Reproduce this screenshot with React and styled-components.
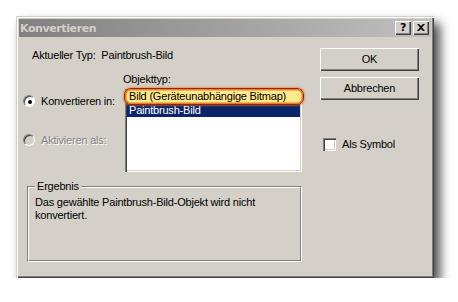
import { styled, createGlobalStyle } from "styled-components"

const GlobalStyle = createGlobalStyle`
  html, body {
    margin: 0;
    background: #ffffff;
  }
  body {
    font-family: "Liberation Sans", Arial, sans-serif;
    font-size: 11px;
    letter-spacing: -0.2px;
    color: #000000;
  }
`

const Page = styled.div`
  padding: 16px 0 0 16px;
`

const Dialog = styled.div`
  box-sizing: border-box;
  width: 418px;
  height: 262px;
  padding: 3px;
  background: #d4d0c8;
  box-shadow:
    inset 1px 1px 0 #d4d0c8,
    inset 2px 2px 0 #ffffff,
    inset -1px -1px 0 #404040,
    inset -2px -2px 0 #808080,
    6px 7px 10px rgba(0, 0, 0, 0.7);
`

const TitleBar = styled.div`
  height: 18px;
  display: flex;
  align-items: center;
  padding: 0 2px 0 1px;
  background: linear-gradient(90deg, #808080 0%, #c0c0c0 100%);
`

const Title = styled.span`
  flex: 1;
  font-family: "DejaVu Sans", Tahoma, sans-serif;
  font-weight: bold;
  font-size: 11px;
  color: #d4d0c8;
  letter-spacing: -0.4px;
`

const TitleButton = styled.div`
  box-sizing: border-box;
  width: 16px;
  height: 14px;
  margin-left: ${(p) => (p.$gap ? "2px" : "0")};
  background: #d4d0c8;
  box-shadow:
    inset 1px 1px 0 #ffffff,
    inset -1px -1px 0 #404040,
    inset -2px -2px 0 #808080;
  display: flex;
  align-items: center;
  justify-content: center;
  font-family: "DejaVu Sans", Tahoma, sans-serif;
  font-weight: bold;
  font-size: 11px;
  line-height: 14px;
  padding-bottom: 1px;
`

const Content = styled.div`
  display: flex;
`

const LeftPane = styled.div`
  width: 283px;
  display: flex;
  flex-direction: column;
`

const RightPane = styled.div`
  flex: 1;
  padding-left: 18px;
  display: flex;
  flex-direction: column;
`

const Line = styled.div`
  height: 13px;
  line-height: 13px;
  white-space: pre;
  margin-top: ${(p) => p.$top || 0}px;
  margin-left: ${(p) => p.$left || 0}px;
`

const Middle = styled.div`
  display: flex;
  margin-top: 3px;
`

const RadioColumn = styled.div`
  width: 102px;
  padding: 6px 0 0 4px;
  display: flex;
  flex-direction: column;
  gap: 27px;
`

const OptionRow = styled.label`
  display: flex;
  align-items: center;
  gap: 6px;
  height: ${(p) => (p.$box ? 13 : 12)}px;
  line-height: 13px;
  color: ${(p) => (p.$disabled ? "#808080" : "#000000")};
  text-shadow: ${(p) => (p.$disabled ? "1px 1px 0 #ffffff" : "none")};
  margin-left: ${(p) => p.$left || 0}px;
  margin-top: ${(p) => p.$top || 0}px;
`

const ListBox = styled.div`
  box-sizing: border-box;
  width: 177px;
  height: 83px;
  padding: 2px;
  background: #ffffff;
  box-shadow:
    inset 1px 1px 0 #808080,
    inset 2px 2px 0 #404040,
    inset -1px -1px 0 #ffffff,
    inset -2px -2px 0 #d4d0c8;
  position: relative;
`

const ListItem = styled.div`
  height: 13px;
  line-height: 13px;
  padding-left: 2px;
  white-space: nowrap;
  color: ${(p) => (p.$selected ? "#ffffff" : "#000000")};
  background: ${(p) => (p.$selected ? "#0a246a" : "transparent")};
`

const Highlight = styled.div`
  position: absolute;
  left: -1px;
  right: -2px;
  top: -1px;
  height: 13px;
  line-height: 13px;
  padding: 1px 0 1px 4px;
  white-space: nowrap;
  border-radius: 7px;
  background: #ffe98c;
  border: 1px solid #8a2a08;
  box-shadow:
    inset 0 0 0 1.5px #ee7a2a,
    0 0 2px 1px rgba(238, 110, 30, 0.6);
`

const GroupBox = styled.div`
  position: relative;
  box-sizing: border-box;
  width: 275px;
  height: 76px;
  margin: 14px 0 0 8px;
  border: 1px solid;
  border-color: #808080 #ffffff #ffffff #808080;
`

const GroupInner = styled.div`
  box-sizing: border-box;
  height: 100%;
  border: 1px solid;
  border-color: #ffffff #808080 #808080 #ffffff;
  padding: 8px 0 0 6px;
  line-height: 13px;
`

const GroupLabel = styled.span`
  position: absolute;
  top: -7px;
  left: 7px;
  padding: 0 2px;
  line-height: 13px;
  background: #d4d0c8;
`

const Button = styled.div`
  box-sizing: border-box;
  width: 99px;
  height: 23px;
  margin-top: ${(p) => p.$top}px;
  background: #d4d0c8;
  box-shadow:
    inset 1px 1px 0 #ffffff,
    inset -1px -1px 0 #404040,
    inset -2px -2px 0 #808080;
  display: flex;
  align-items: center;
  justify-content: center;
  padding-bottom: 1px;
`

const RadioDot = styled.span`
  box-sizing: border-box;
  width: 12px;
  height: 12px;
  border-radius: 50%;
  flex-shrink: 0;
  background: ${(p) => (p.$disabled ? "#d4d0c8" : "#ffffff")};
  border: 1px solid;
  border-color: #808080 #ffffff #ffffff #808080;
  box-shadow: inset 1px 1px 0 #404040;
  display: flex;
  align-items: center;
  justify-content: center;
  &::after {
    content: "";
    display: ${(p) => (p.$checked ? "block" : "none")};
    width: 4px;
    height: 4px;
    border-radius: 50%;
    background: #000000;
    margin: 1px 0 0 1px;
  }
`

const CheckBox = styled.span`
  box-sizing: border-box;
  width: 13px;
  height: 13px;
  flex-shrink: 0;
  background: #ffffff;
  box-shadow:
    inset 1px 1px 0 #808080,
    inset 2px 2px 0 #404040,
    inset -1px -1px 0 #ffffff,
    inset -2px -2px 0 #d4d0c8;
`

export default function App() {
  return (
    <>
      <GlobalStyle />
      <Page>
        <Dialog>
          <TitleBar>
            <Title>Konvertieren</Title>
            <TitleButton>?</TitleButton>
            <TitleButton $gap>
              <svg width="8" height="7" viewBox="0 0 8 7">
                <path d="M0 0h2l2 2 2-2h2L5 3.5 8 7H6L4 5 2 7H0l3-3.5z" fill="#000" />
              </svg>
            </TitleButton>
          </TitleBar>
          <Content>
            <LeftPane>
              <Line $top={12} $left={13}>Aktueller Typ:  Paintbrush-Bild</Line>
              <Line $top={11} $left={104}>Objekttyp:</Line>
              <Middle>
                <RadioColumn>
                  <OptionRow>
                    <RadioDot $checked />
                    Konvertieren in:
                  </OptionRow>
                  <OptionRow $disabled>
                    <RadioDot $disabled />
                    Aktivieren als:
                  </OptionRow>
                </RadioColumn>
                <ListBox>
                  <ListItem>&nbsp;</ListItem>
                  <ListItem $selected>Paintbrush-Bild</ListItem>
                  <Highlight>Bild (Geräteunabhängige Bitmap)</Highlight>
                </ListBox>
              </Middle>
              <GroupBox>
                <GroupLabel>Ergebnis</GroupLabel>
                <GroupInner>
                  Das gewählte Paintbrush-Bild-Objekt wird nicht
                  <br />
                  konvertiert.
                </GroupInner>
              </GroupBox>
            </LeftPane>
            <RightPane>
              <Button $top={11}>OK</Button>
              <Button $top={6}>Abbrechen</Button>
              <OptionRow $box $left={3} $top={38}>
                <CheckBox />
                Als Symbol
              </OptionRow>
            </RightPane>
          </Content>
        </Dialog>
      </Page>
    </>
  )
}
